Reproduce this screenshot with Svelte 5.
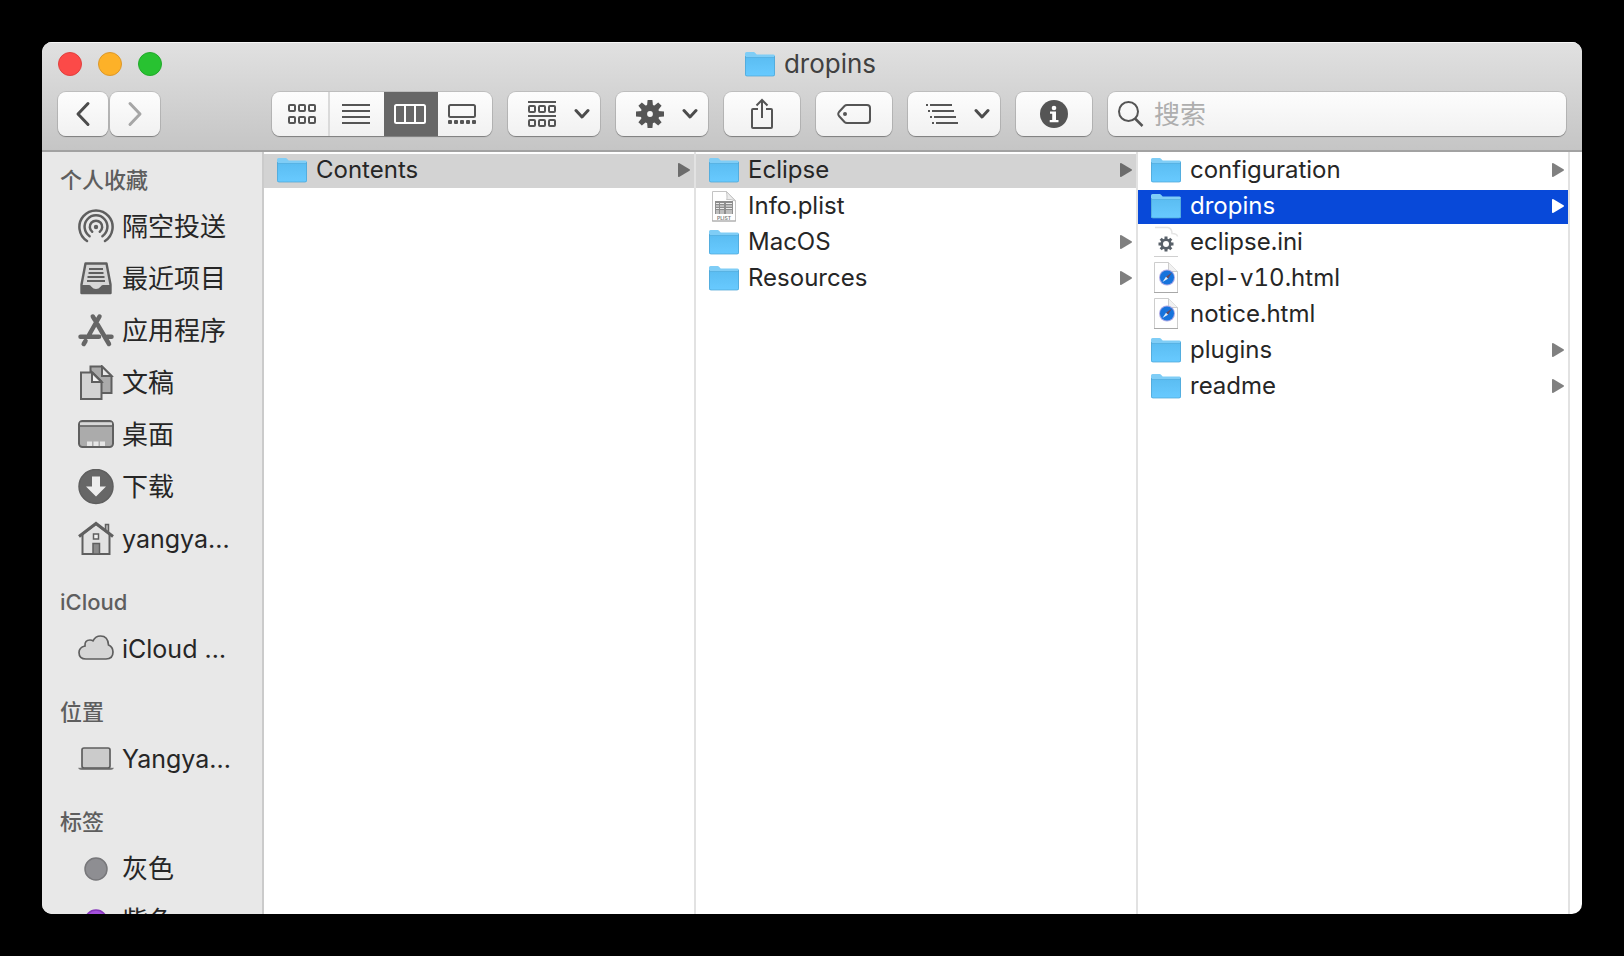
<script>
  const sections = [
    {
      title: '个人收藏',
      items: [
        { icon: 'airdrop', label: '隔空投送' },
        { icon: 'recents', label: '最近项目' },
        { icon: 'apps', label: '应用程序' },
        { icon: 'documents', label: '文稿' },
        { icon: 'desktop', label: '桌面' },
        { icon: 'downloads', label: '下载' },
        { icon: 'home', label: 'yangya...', latin: true }
      ]
    },
    { title: 'iCloud', items: [{ icon: 'cloud', label: 'iCloud …', latin: true }] },
    { title: '位置', items: [{ icon: 'laptop', label: 'Yangya...', latin: true }] },
    {
      title: '标签',
      items: [
        { icon: 'tag-gray', label: '灰色' },
        { icon: 'tag-purple', label: '紫色' }
      ]
    }
  ];

  const columns = [
    [{ kind: 'folder', name: 'Contents', state: 'open' }],
    [
      { kind: 'folder', name: 'Eclipse', state: 'open' },
      { kind: 'plist', name: 'Info.plist' },
      { kind: 'folder', name: 'MacOS' },
      { kind: 'folder', name: 'Resources' }
    ],
    [
      { kind: 'folder', name: 'configuration' },
      { kind: 'folder', name: 'dropins', state: 'selected' },
      { kind: 'ini', name: 'eclipse.ini' },
      { kind: 'html', name: 'epl-v10.html' },
      { kind: 'html', name: 'notice.html' },
      { kind: 'folder', name: 'plugins' },
      { kind: 'folder', name: 'readme' }
    ]
  ];

  const teeth = [0, 45, 90, 135, 180, 225, 270, 315];
</script>

{#snippet folder()}
  <svg class="file-icon" viewBox="0 0 32 32" aria-hidden="true">
    <path d="M1 5.500q0-1.500 1.500-1.500h7q1 0 1.800.9l1.400 1.600H29.500q1.500 0 1.500 1.500V15H1z" fill="#7fcdf6" />
    <path d="M1 9.500h30v17.300q0 1.200-1.200 1.200H2.200Q1 28 1 26.800z" fill="url(#folder-face)" />
    <path d="M1 9.500h30" stroke="#58b3e4" stroke-width="1" />
    <path d="M1.500 8v18.500q0 1.500 1.500 1.500h26q1.500 0 1.500-1.500V8" fill="none" stroke="#4fa6d6" stroke-width="1" opacity=".75" />
  </svg>
{/snippet}

{#snippet chevron()}
  <svg width="16" height="12" viewBox="0 0 16 12" aria-hidden="true">
    <path d="M2 2.500l6 6.500 6-6.500" fill="none" stroke="#4c4c4c" stroke-width="3" stroke-linecap="round" stroke-linejoin="round" />
  </svg>
{/snippet}

{#snippet fileIcon(kind)}
  {#if kind === 'folder'}
    {@render folder()}
  {:else}
    <svg class="file-icon" viewBox="0 0 32 32" aria-hidden="true">
      {#if kind === 'plist'}
        <path d="M4.500 1.500h14l9 9V31h-23z" fill="#fff" stroke="#c4c4c4" />
        <path d="M4 31h24" stroke="#a8a8a8" />
        <path d="M18.500 1.500q1 7.500 0 8 5-.5 9 1.500z" fill="#ececec" stroke="#c4c4c4" />
        <path d="M7 11h18v13H7z" fill="#8e8e8e" />
        <path d="M8 13.500h3m1 0h4m2 0h6M8 16h3m1 0h4m2 0h6M8 18.500h3m1 0h4m2 0h6M8 21h3m1 0h4m2 0h6M8 23h3m1 0h4m2 0h6" stroke="#ededed" />
        <text x="16" y="29.500" text-anchor="middle" font-size="5" font-weight="600" fill="#777">PLIST</text>
      {:else if kind === 'ini'}
        <path d="M5 1.500h13q4 1 4 6 5 0 5.500 3" fill="none" stroke="#e4e4e4" stroke-width="1.500" />
        <path d="M4 30.500h24" stroke="#cfcfcf" />
        <g transform="translate(16 18)" fill="#586069">
          {#each teeth as angle}
            <rect x="-1.500" y="-7.500" width="3" height="4" transform={`rotate(${angle})`} />
          {/each}
          <circle r="4.300" fill="#fff" stroke="#586069" stroke-width="2.600" />
        </g>
      {:else}
        <path d="M4.500.5h14l9 9v21h-23z" fill="#fff" stroke="#cdcdcd" />
        <path d="M4 30.500h24" stroke="#a8a8a8" />
        <path d="M18.500.5v9h9" fill="#f1f1f1" stroke="#cdcdcd" />
        <circle cx="17" cy="15.500" r="8" fill="#a9a8e6" />
        <circle cx="17" cy="15.500" r="7" fill="#1673dc" />
        <path d="M22 10.500l-4 6.200-2-2z" fill="#6c4a5d" />
        <path d="M12.500 20l3.500-5.300 2 2z" fill="#dfeefa" />
      {/if}
    </svg>
  {/if}
{/snippet}

{#snippet sideIcon(kind)}
  <svg class="side-icon" viewBox="0 0 36 36" aria-hidden="true" fill="none" stroke="#5f5f5f" stroke-width="2">
    {#if kind === 'airdrop'}
      <g stroke-width="2.500" stroke-linecap="round">
        <path d="M9 32A16.600 16.600 0 1 1 27 32" />
        <path d="M11.600 27.200A11.400 11.400 0 1 1 24.400 27.200" />
        <path d="M14.200 22.800A6.200 6.200 0 1 1 21.800 22.800" />
      </g>
      <circle cx="18" cy="18" r="2.200" fill="#5f5f5f" stroke="none" />
    {:else if kind === 'recents'}
      <path d="M7.500 2.500h21l4 21v8.500h-29v-8.500z" fill="#d6d6d6" stroke-linejoin="round" stroke-width="2.400" />
      <path d="M11 8h14M10.500 12h15M9.500 16h17M9 20h18" />
      <path d="M3 24h8q2 0 3 2t4 2 4-2 3-2h8v7q0 2-2 2H5q-2 0-2-2z" fill="#606060" stroke="none" />
      <path d="M12 23.500h12q-1.500 3.500-6 3.500t-6-3.500z" fill="#d6d6d6" stroke="none" />
    {:else if kind === 'apps'}
      <g stroke="#666" stroke-width="4.500" stroke-linecap="round">
        <path d="M2.500 23.700H21M29 23.700h4.500M21.500 3.500L11 22M14.800 3.500l2 3.200M7.500 28l-1.800 3" />
        <path d="M19.500 11.500l11.500 19.500" />
      </g>
    {:else if kind === 'documents'}
      <path d="M12.500 1.500h11.500l9.500 9.500v17h-21z" fill="#ababab" />
      <path d="M24 1.500V11h9.500z" fill="#e8e8e8" />
      <path d="M3 7.500h11.500l9 9V34H3z" fill="#d3d3d3" />
      <path d="M14 7.500V17h9.500z" fill="#f2f2f2" />
    {:else if kind === 'desktop'}
      <rect x="1" y="4" width="34" height="26" rx="3.500" fill="#ababab" />
      <path d="M2 5.500h32v3H2z" fill="#d8d8d8" stroke="none" />
      <path d="M1 9h34" stroke-width="1.500" />
      <path d="M9 24.500h5V29H9zM15.500 24.500h5V29h-5zM22 24.500h5V29h-5z" fill="#e6e6e6" stroke="none" />
    {:else if kind === 'downloads'}
      <circle cx="18" cy="17.500" r="17" fill="#676767" stroke="#5f5f5f" stroke-width="1.500" />
      <path d="M14 7.500h8v10h6l-10 10-10-10h6z" fill="#ededed" stroke="none" />
    {:else if kind === 'home'}
      <path d="M27.500 9V3.500h3V13" fill="#bbb" stroke-width="1.500" />
      <path d="M4.500 13L18 3l13.500 10v20h-27z" fill="#e2e2e2" />
      <path d="M1 15.500L18 2.500l17 13" stroke-width="3" />
      <path d="M15.500 13h5v5h-5z" fill="#f2f2f2" stroke-width="1.500" />
      <path d="M15 22.500h6.500V33H15z" fill="#8b8b8b" stroke-width="1.500" />
    {:else if kind === 'cloud'}
      <path d="M8 28q-7 0-7-6.500 0-5 6-6.500-.5-6 5-6 2 0 3 .8 2.500-4.800 7.500-4.800 7.500 0 8 9 4.500 2 4.500 7 0 7-7 7z" fill="#d6d6d6" stroke-width="1.700" />
    {:else if kind === 'laptop'}
      <rect x="4" y="7" width="28" height="20" rx="2" fill="#cbcbcb" stroke-width="1.700" />
      <path d="M.5 27.200h35q-1 1.300-3 1.300h-29q-2 0-3-1.300z" fill="#666" stroke-width=".5" />
    {:else}
      <circle cx="18" cy="18" r="11" fill={kind === 'tag-gray' ? '#8e8e92' : '#a550dc'} stroke={kind === 'tag-gray' ? '#77777a' : '#8738bb'} stroke-width="1.500" />
    {/if}
  </svg>
{/snippet}

<svg class="defs" aria-hidden="true">
  <defs>
    <linearGradient id="folder-face" x1="0" y1="0" x2="0" y2="1">
      <stop offset="0" stop-color="#5bbdf2" />
      <stop offset="1" stop-color="#68caff" />
    </linearGradient>
  </defs>
</svg>

<div class="desk">
  <main class="window">
    <header>
      <div class="titlebar">
        <div class="lights">
          <button class="light close" aria-label="关闭"></button>
          <button class="light minimize" aria-label="最小化"></button>
          <button class="light zoom" aria-label="缩放"></button>
        </div>
        <h1>{@render folder()}<span>dropins</span></h1>
      </div>

      <div class="toolbar">
        <div class="nav">
          <button class="tool" aria-label="后退">
            <svg width="16" height="26" viewBox="0 0 16 26"><path d="M13 2.500L3 13l10 10.500" fill="none" stroke="#4c4c4c" stroke-width="3" stroke-linecap="round" stroke-linejoin="round" /></svg>
          </button>
          <button class="tool" aria-label="前进">
            <svg width="16" height="26" viewBox="0 0 16 26"><path d="M3 2.500L13 13 3 23.500" fill="none" stroke="#a6a6a6" stroke-width="3" stroke-linecap="round" stroke-linejoin="round" /></svg>
          </button>
        </div>

        <div class="views">
          <button aria-label="图标显示">
            <svg width="28" height="20" viewBox="0 0 28 20" fill="none" stroke="#555" stroke-width="2">
              {#each [1, 11, 21] as x}{#each [1, 13] as y}<rect {x} {y} width="6" height="6" rx="1" />{/each}{/each}
            </svg>
          </button>
          <button aria-label="列表显示">
            <svg width="28" height="20" viewBox="0 0 28 20" stroke="#555" stroke-width="2"><path d="M0 1h28M0 7h28M0 13h28M0 19h28" /></svg>
          </button>
          <button class="active" aria-label="分栏显示" aria-pressed="true">
            <svg width="32" height="20" viewBox="0 0 32 20" fill="none" stroke="#fff" stroke-width="2"><rect x="1" y="1" width="30" height="18" rx="1.500" /><path d="M11 1v18M21 1v18" /></svg>
          </button>
          <button aria-label="画廊显示">
            <svg width="28" height="20" viewBox="0 0 28 20" fill="none" stroke="#555" stroke-width="2">
              <rect x="1" y="1" width="26" height="12" rx="1.500" />
              {#each [0, 6, 12, 18, 24] as x}<rect {x} y="16" width="4" height="4" rx="1" fill="#555" stroke="none" />{/each}
            </svg>
          </button>
        </div>

        <button class="tool menu" aria-label="分组">
          <svg width="28" height="26" viewBox="0 0 28 26" fill="none" stroke="#555" stroke-width="2">
            <path d="M0 1h28M0 15h28" />
            {#each [1, 11, 21] as x}{#each [5, 19] as y}<rect {x} {y} width="6" height="6" rx="1" />{/each}{/each}
          </svg>
          {@render chevron()}
        </button>

        <button class="tool menu" aria-label="操作">
          <svg width="28" height="28" viewBox="-14 -14 28 28" fill="#555">
            {#each teeth as angle}<path d="M-2.400-14h4.800l.6 6h-6z" transform={`rotate(${angle})`} />{/each}
            <circle r="6.200" fill="none" stroke="#555" stroke-width="6.600" />
          </svg>
          {@render chevron()}
        </button>

        <button class="tool wide" aria-label="共享">
          <svg width="22" height="32" viewBox="0 0 22 32" fill="none" stroke="#555" stroke-width="2">
            <path d="M7 11H2q-1 0-1 1v17q0 1 1 1h18q1 0 1-1V12q0-1-1-1h-5" />
            <path d="M11 20V2M5.500 7.500L11 2l5.500 5.500" />
          </svg>
        </button>

        <button class="tool wide" aria-label="标签">
          <svg width="34" height="22" viewBox="0 0 34 22" fill="none" stroke="#555" stroke-width="2">
            <path d="M10 2h20q3 0 3 3v12q0 3-3 3H10q-1.500 0-2.500-1L2 13q-1.500-2 0-4l5.500-6q1-1 2.500-1z" />
            <circle cx="8" cy="11" r="2" fill="#555" stroke="none" />
          </svg>
        </button>

        <button class="tool menu sort" aria-label="排序">
          <svg width="32" height="20" viewBox="0 0 32 20" stroke="#555" stroke-width="2">
            <path d="M0 1h2M4 1h22M2 7h2M6 7h22M4 13h2M8 13h22M6 19h2M10 19h22" />
          </svg>
          {@render chevron()}
        </button>

        <button class="tool wide" aria-label="简介">
          <svg width="28" height="28" viewBox="0 0 28 28">
            <circle cx="14" cy="14" r="14" fill="#555" />
            <circle cx="14" cy="8" r="2.300" fill="#fff" />
            <path d="M10 11.500h6v8.500h2.500v2.300H9.700V20h2.500v-6.200H10z" fill="#fff" />
          </svg>
        </button>

        <label class="search">
          <svg width="26" height="26" viewBox="0 0 26 26" fill="none" stroke="#555" stroke-width="2"><circle cx="10.500" cy="10.500" r="9.500" /><path d="M17 17.500l7.500 7.500" stroke-width="2.500" /></svg>
          <input type="text" placeholder="搜索" aria-label="搜索" />
        </label>
      </div>
    </header>

    <div class="body">
      <nav class="sidebar">
        {#each sections as section}
          <section>
            <h2>{section.title}</h2>
            <ul>
              {#each section.items as item}
                <li><a href="#{item.icon}" class:latin={item.latin}>{@render sideIcon(item.icon)}<span>{item.label}</span></a></li>
              {/each}
            </ul>
          </section>
        {/each}
      </nav>

      <div class="columns">
        {#each columns as rows}
          <ul class="column">
            {#each rows as row}
              <li>
                <button class="row {row.state ?? ''}">
                  {@render fileIcon(row.kind)}
                  <span>{row.name}</span>
                  {#if row.kind === 'folder'}
                    <svg class="arrow" width="12" height="14" viewBox="0 0 12 14" aria-hidden="true"><path d="M0 1q0-1.500 1.500-.7l10 6q1 .7 0 1.400l-10 6Q0 14.500 0 13z" /></svg>
                  {/if}
                </button>
              </li>
            {/each}
          </ul>
        {/each}
      </div>
    </div>
  </main>
</div>

<style>
  :global(body) {
    margin: 0;
    background: #000;
  }

  button,
  input {
    margin: 0;
    padding: 0;
    border: 0;
    font: inherit;
    color: inherit;
    background: none;
  }

  svg {
    flex: none;
    display: block;
  }

  ul {
    margin: 0;
    padding: 0;
    list-style: none;
  }

  .defs {
    position: absolute;
    width: 0;
    height: 0;
  }

  .desk {
    box-sizing: border-box;
    height: 100vh;
    padding: 42px;
    font-family: Inter, "Noto Sans CJK SC", sans-serif;
    color: #262626;
  }

  .window {
    display: flex;
    flex-direction: column;
    height: 100%;
    border-radius: 10px;
    overflow: hidden;
    background: #fff;
  }

  header {
    flex: none;
    padding: 0 16px 14px;
    background: linear-gradient(#e1e1e1, #c5c5c5);
    border-bottom: 2px solid #a2a2a2;
    box-shadow: inset 0 1px #f6f6f6;
  }

  .titlebar {
    display: grid;
    grid-template-columns: 1fr auto 1fr;
    align-items: center;
    height: 44px;
    margin-bottom: 6px;
  }

  .lights {
    display: flex;
    gap: 16px;
  }

  .light {
    width: 24px;
    height: 24px;
    border-radius: 50%;
    border: 1px solid;
  }

  .close {
    background: #fc4a48;
    border-color: #e0403e;
  }

  .minimize {
    background: #fdb128;
    border-color: #dc982b;
  }

  .zoom {
    background: #28c231;
    border-color: #22a92b;
  }

  h1 {
    display: flex;
    align-items: center;
    gap: 8px;
    margin: 0;
    padding-right: 4px;
    font-size: 26px;
    line-height: 32px;
    font-weight: 400;
    color: #404040;
  }

  .toolbar {
    display: flex;
    gap: 16px;
    height: 44px;
  }

  .nav {
    display: flex;
    gap: 2px;
    margin-right: 96px;
  }

  .tool,
  .views,
  .search {
    border-radius: 8px;
    background: linear-gradient(#fdfdfd, #f1f1f1);
    box-shadow: 0 0 0 1px rgba(0, 0, 0, 0.1), 0 1px 1px rgba(0, 0, 0, 0.3);
  }

  .tool {
    display: flex;
    flex: none;
    align-items: center;
    justify-content: center;
    width: 50px;
  }

  .tool.wide {
    width: 76px;
  }

  .tool.menu {
    justify-content: space-between;
    width: 92px;
    padding: 0 10px 0 20px;
  }

  .tool.sort {
    padding-left: 18px;
  }

  .views {
    display: flex;
    flex: none;
    overflow: hidden;
  }

  .views button {
    box-sizing: border-box;
    display: flex;
    align-items: center;
    justify-content: center;
    width: 54px;
    padding-right: 2px;
  }

  .views button:first-child {
    width: 58px;
    padding: 0 0 0 4px;
    border-right: 2px solid #dadada;
  }

  .views button:last-child {
    padding-right: 6px;
  }

  .views .active {
    background: #676767;
  }

  .search {
    display: flex;
    flex: 1;
    align-items: center;
    gap: 10px;
    min-width: 0;
    padding: 0 10px;
  }

  .search input {
    flex: 1;
    min-width: 0;
    padding-top: 2px;
    font-size: 26px;
    line-height: 36px;
    outline: 0;
  }

  .search input::placeholder {
    color: #aeaeae;
    opacity: 1;
  }

  .body {
    display: flex;
    flex: 1;
    min-height: 0;
  }

  .sidebar {
    flex: none;
    box-sizing: border-box;
    width: 222px;
    overflow: hidden;
    background: #e8e8e8;
    border-right: 2px solid #cbcbcb;
  }

  h2 {
    margin: 0;
    padding: 18px 0 2px 18px;
    font-size: 22px;
    line-height: 38px;
    font-weight: 500;
    color: #5e5e5e;
  }

  section:first-child h2 {
    padding-top: 9px;
  }

  .sidebar a {
    display: flex;
    align-items: center;
    gap: 8px;
    height: 52px;
    padding-left: 36px;
    font-size: 26px;
    line-height: 36px;
    color: inherit;
    text-decoration: none;
    white-space: nowrap;
  }

  .sidebar .latin {
    font-size: 25px;
  }

  .side-icon {
    width: 36px;
    height: 36px;
  }

  .columns {
    display: grid;
    flex: 1;
    grid-template-columns: 432fr 442fr 432fr 12px;
    min-width: 0;
  }

  .column {
    display: flex;
    flex-direction: column;
    gap: 2px;
    padding-top: 2px;
    border-right: 2px solid #e2e2e2;
    min-width: 0;
  }

  .row {
    box-sizing: border-box;
    display: flex;
    align-items: center;
    gap: 8px;
    width: 100%;
    height: 34px;
    padding: 0 4px 2px 12px;
    font-size: 24px;
    line-height: 32px;
    font-variant-numeric: tabular-nums;
    text-align: left;
  }

  .row span {
    flex: 1;
    overflow: hidden;
    white-space: nowrap;
    text-overflow: ellipsis;
  }

  .file-icon {
    width: 32px;
    height: 32px;
  }

  .arrow {
    fill: #808080;
  }

  .open {
    background: #d3d3d3;
  }

  .open .arrow {
    fill: #6c6c6c;
  }

  .selected {
    background: #0849d9;
    color: #fff;
  }

  .selected .arrow {
    fill: #fff;
  }
</style>
